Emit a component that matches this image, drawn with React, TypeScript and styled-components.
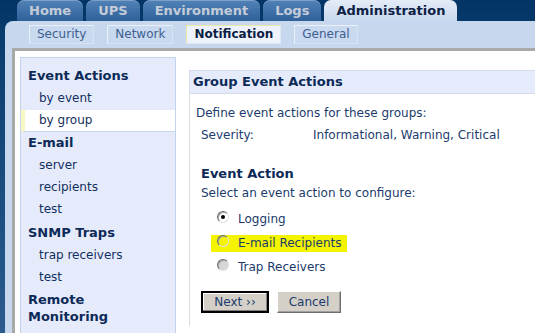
import React from 'react'
import styled, { createGlobalStyle } from 'styled-components'

const GlobalStyle = createGlobalStyle`
  html, body {
    margin: 0;
    padding: 0;
    overflow: hidden;
  }
  body {
    width: 535px;
    height: 333px;
    background: linear-gradient(#033466 0px, #0b3c6e 40px, #2c5c8f 333px);
    font-family: "DejaVu Sans", Verdana, sans-serif;
  }
`

const Page = styled.div`
  display: flex;
  flex-direction: column;
  height: 333px;
`
const TopTabs = styled.div`
  display: flex;
  align-items: flex-end;
  gap: 3px;
  height: 23px;
  padding-left: 17px;
`
const Tab = styled.div<{ $active?: boolean }>`
  height: 21px;
  padding: 0 12px;
  line-height: 21px;
  font-size: 13px;
  font-weight: bold;
  white-space: nowrap;
  border-radius: 7px 7px 0 0;
  color: ${p => (p.$active ? '#0d2246' : '#c3ccd8')};
  background: ${p =>
    p.$active
      ? 'linear-gradient(#e4ecf7, #c9d8ee)'
      : 'linear-gradient(#5183b8, #2f6099)'};
  box-shadow: ${p => (p.$active ? 'none' : 'inset 0 1px 0 rgba(255,255,255,0.25)')};
`
const Shell = styled.div`
  flex: 1;
  display: flex;
  flex-direction: column;
  margin-left: 5px;
  background: #c7d7ed;
  border-radius: 8px 0 0 0;
`
const SubNav = styled.div`
  display: flex;
  gap: 13px;
  height: 27px;
  padding: 4px 0 0 24px;
  box-sizing: border-box;
`
const SubTab = styled.div<{ $active?: boolean }>`
  height: 19px;
  padding: 0 7px;
  box-sizing: border-box;
  line-height: 17px;
  font-size: 12px;
  white-space: nowrap;
  font-weight: ${p => (p.$active ? 'bold' : 'normal')};
  color: ${p => (p.$active ? '#0b1d42' : '#3d6090')};
  background: ${p => (p.$active ? '#eef2fc' : '#c9d9ef')};
  border: 1px solid ${p => (p.$active ? '#ece8a8' : '#eaf0f9')};
  border-right-color: ${p => (p.$active ? '#dfe6f4' : '#d8e2f1')};
  border-bottom-color: ${p => (p.$active ? '#dfe6f4' : '#d8e2f1')};
`
const Frame = styled.div`
  flex: 1;
  display: flex;
  align-items: flex-start;
  gap: 13px;
  margin-left: 7px;
  padding: 6px 0 0 5px;
  background: #ffffff;
  border-top: 3px solid #a9a9a9;
  border-left: 3px solid #a9a9a9;
  min-width: 0;
`
const Sidebar = styled.div`
  flex: 0 0 156px;
  box-sizing: border-box;
  height: 280px;
  padding-top: 6px;
  background: #e6ebfb;
  border: 1px solid #c3d3ec;
  border-bottom: none;
`
const SideHeading = styled.div`
  padding: 3.5px 8px 3.5px 7px;
  line-height: 16.5px;
  font-size: 13px;
  font-weight: bold;
  color: #0c2a58;
`
const SideItem = styled.div<{ $selected?: boolean }>`
  height: 22px;
  box-sizing: border-box;
  padding-left: ${p => (p.$selected ? '14px' : '18px')};
  line-height: 21px;
  font-size: 12px;
  color: #12305f;
  background: ${p => (p.$selected ? '#ffffff' : 'transparent')};
  border-left: ${p => (p.$selected ? '4px solid #f8f8c4' : 'none')};
  border-bottom: 1px solid ${p => (p.$selected ? '#c9d6ee' : 'transparent')};
`
const Main = styled.div`
  flex: 0 0 380px;
  margin-top: 13px;
  display: flex;
  flex-direction: column;
`
const MainHeader = styled.div`
  height: 24px;
  box-sizing: border-box;
  padding-left: 3px;
  line-height: 22px;
  font-size: 13px;
  font-weight: bold;
  color: #0c2a58;
  background: #e6ebfb;
  border: 1px solid #d4dbe8;
  border-right: none;
`
const MainBody = styled.div`
  height: 221px;
  padding: 11px 0 0 6px;
  border-left: 1px solid #dcdcdc;
  font-size: 12px;
  color: #1b3b6c;
`
const Line = styled.div<{ $top?: number }>`
  margin-top: ${p => p.$top ?? 0}px;
  line-height: 16px;
`
const Indented = styled.div<{ $top?: number }>`
  margin-top: ${p => p.$top ?? 0}px;
  padding-left: 5px;
`
const InfoRow = styled.div`
  display: flex;
  margin-top: 6px;
  padding-left: 5px;
  line-height: 16px;
`
const InfoLabel = styled.div`
  width: 112px;
`
const SectionTitle = styled.div`
  line-height: 16px;
  font-size: 13px;
  font-weight: bold;
  color: #0c2a58;
`
const RadioList = styled.div`
  display: flex;
  flex-direction: column;
  margin-top: 6px;
`
const RadioRow = styled.label`
  display: flex;
  align-items: center;
  height: 24px;
  padding-left: 15px;
`
const RadioWrap = styled.span<{ $mark?: boolean }>`
  display: inline-flex;
  align-items: center;
  height: 17px;
  padding: 0 6px;
  background: ${p => (p.$mark ? '#f4f400' : 'transparent')};
`
const Radio = styled.span<{ $checked?: boolean; $fill: string }>`
  position: relative;
  top: -2px;
  width: 12px;
  height: 12px;
  box-sizing: border-box;
  border-radius: 50%;
  background: ${p => p.$fill};
  border: 1px solid;
  border-color: #6b6b6b #e2e2e2 #e2e2e2 #6b6b6b;
  box-shadow: inset 1px 1px 0 #a8a8a8;
  &::after {
    content: '';
    display: ${p => (p.$checked ? 'block' : 'none')};
    position: absolute;
    left: 3px;
    top: 3px;
    width: 4px;
    height: 4px;
    border-radius: 50%;
    background: #000;
  }
`
const RadioText = styled.span`
  margin-left: 9px;
  font-size: 12px;
  color: #1b3b6c;
`
const ButtonRow = styled.div`
  display: flex;
  gap: 8px;
  margin-top: 12px;
  padding-left: 5px;
`
const Button = styled.button<{ $default?: boolean }>`
  height: 22px;
  padding: 0;
  width: ${p => (p.$default ? '68px' : '64px')};
  font-family: "DejaVu Sans", Verdana, sans-serif;
  font-size: 12px;
  color: #1b3b6c;
  background: #d4d0c8;
  border: ${p => (p.$default ? '2px solid #000' : '1px solid')};
  border-color: ${p => (p.$default ? '#000' : '#ffffff #6e6e6e #6e6e6e #ffffff')};
  box-shadow: ${p => (p.$default ? 'inset -1px -1px 0 #808080, inset 1px 1px 0 #fff' : 'inset -1px -1px 0 #a0a0a0')};
`

const topTabs = ['Home', 'UPS', 'Environment', 'Logs', 'Administration']
const subTabs = ['Security', 'Network', 'Notification', 'General']

export default function App() {
  return (
    <Page>
      <GlobalStyle />
      <TopTabs>
        {topTabs.map(t => (
          <Tab key={t} $active={t === 'Administration'}>{t}</Tab>
        ))}
      </TopTabs>
      <Shell>
        <SubNav>
          {subTabs.map(t => (
            <SubTab key={t} $active={t === 'Notification'}>{t}</SubTab>
          ))}
        </SubNav>
        <Frame>
          <Sidebar>
            <SideHeading>Event Actions</SideHeading>
            <SideItem>by event</SideItem>
            <SideItem $selected>by group</SideItem>
            <SideHeading>E-mail</SideHeading>
            <SideItem>server</SideItem>
            <SideItem>recipients</SideItem>
            <SideItem>test</SideItem>
            <SideHeading>SNMP Traps</SideHeading>
            <SideItem>trap receivers</SideItem>
            <SideItem>test</SideItem>
            <SideHeading>Remote<br />Monitoring</SideHeading>
          </Sidebar>
          <Main>
            <MainHeader>Group Event Actions</MainHeader>
            <MainBody>
              <Line>Define event actions for these groups:</Line>
              <InfoRow>
                <InfoLabel>Severity:</InfoLabel>
                <div>Informational, Warning, Critical</div>
              </InfoRow>
              <Indented $top={23}>
                <SectionTitle>Event Action</SectionTitle>
                <Line $top={3}>Select an event action to configure:</Line>
              </Indented>
              <RadioList>
                <RadioRow>
                  <RadioWrap>
                    <Radio $checked $fill="#ffffff" />
                    <RadioText>Logging</RadioText>
                  </RadioWrap>
                </RadioRow>
                <RadioRow>
                  <RadioWrap $mark>
                    <Radio $fill="transparent" />
                    <RadioText>E-mail Recipients</RadioText>
                  </RadioWrap>
                </RadioRow>
                <RadioRow>
                  <RadioWrap>
                    <Radio $fill="#d6d6d6" />
                    <RadioText>Trap Receivers</RadioText>
                  </RadioWrap>
                </RadioRow>
              </RadioList>
              <ButtonRow>
                <Button $default>Next ››</Button>
                <Button>Cancel</Button>
              </ButtonRow>
            </MainBody>
          </Main>
        </Frame>
      </Shell>
    </Page>
  )
}
